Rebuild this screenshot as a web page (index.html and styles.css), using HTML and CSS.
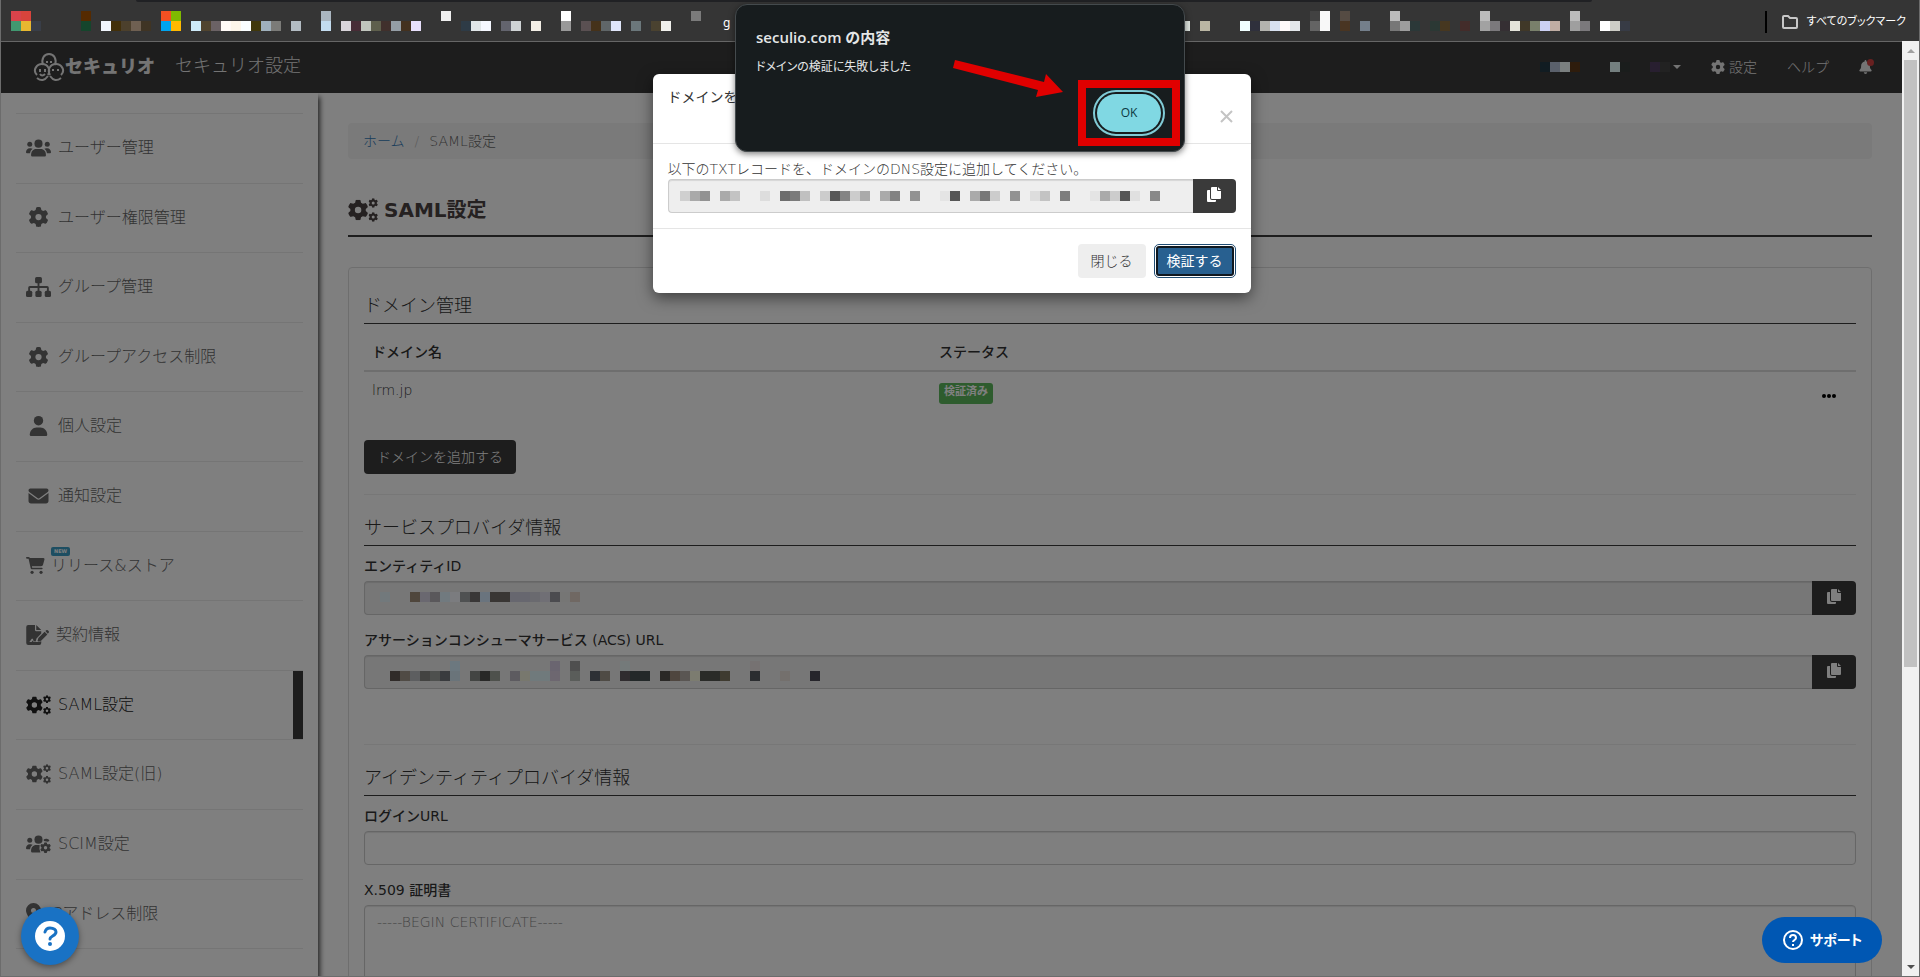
FILE: index.html
```html
<!DOCTYPE html>
<html lang="ja">
<head>
    <meta charset="UTF-8">
    <meta name="viewport" content="width=device-width, initial-scale=1.0">
    <title>SAML設定 | セキュリオ</title>
    <link rel="stylesheet" href="styles.css">
</head>
<body>

<!-- icons -->
<svg class="sprite" aria-hidden="true">
    <symbol id="gear" viewBox="0 0 512 512"><path d="M495.9 166.6c3.2 8.7 .5 18.4-6.4 24.6l-43.3 39.4c1.1 8.3 1.7 16.8 1.7 25.4s-.6 17.1-1.7 25.4l43.3 39.4c6.9 6.2 9.6 15.9 6.4 24.6c-4.4 11.9-9.7 23.3-15.8 34.3l-4.7 8.1c-6.6 11-14 21.4-22.1 31.2c-5.9 7.2-15.7 9.6-24.5 6.8l-55.7-17.7c-13.4 10.3-28.2 18.9-44 25.4l-12.5 57.1c-2 9.1-9 16.3-18.2 17.8c-13.8 2.3-28 3.5-42.5 3.5s-28.7-1.2-42.5-3.5c-9.2-1.5-16.2-8.7-18.2-17.8l-12.5-57.1c-15.8-6.5-30.6-15.1-44-25.4L83.1 425.9c-8.8 2.8-18.6 .3-24.5-6.8c-8.1-9.8-15.5-20.2-22.1-31.2l-4.7-8.1c-6.1-11-11.4-22.4-15.8-34.3c-3.2-8.7-.5-18.4 6.4-24.6l43.3-39.4C64.6 273.1 64 264.6 64 256s.6-17.1 1.7-25.4L22.4 191.2c-6.9-6.2-9.6-15.9-6.4-24.6c4.4-11.9 9.7-23.3 15.8-34.3l4.7-8.1c6.6-11 14-21.4 22.1-31.2c5.9-7.2 15.7-9.6 24.5-6.8l55.7 17.7c13.4-10.3 28.2-18.9 44-25.4l12.5-57.1c2-9.1 9-16.3 18.2-17.8C227.3 1.2 241.5 0 256 0s28.7 1.2 42.5 3.5c9.2 1.5 16.2 8.7 18.2 17.8l12.5 57.1c15.8 6.5 30.6 15.1 44 25.4l55.7-17.7c8.8-2.8 18.6-.3 24.5 6.8c8.1 9.8 15.5 20.2 22.1 31.2l4.7 8.1c6.1 11 11.4 22.4 15.8 34.3zM256 336a80 80 0 1 0 0-160 80 80 0 1 0 0 160z"/></symbol>
    <symbol id="gears" viewBox="0 0 640 512">
        <use href="#gear" x="-5" y="36" width="440" height="440"/>
        <use href="#gear" x="435" y="4" width="205" height="205"/>
        <use href="#gear" x="435" y="303" width="205" height="205"/>
    </symbol>
    <symbol id="users" viewBox="0 0 640 512">
        <circle cx="320" cy="144" r="104"/>
        <circle cx="96" cy="160" r="64"/>
        <circle cx="544" cy="160" r="64"/>
        <path d="M130 448c-6-110 55-168 130-168h120c75 0 136 58 130 168q-3 24-26 24H156q-23 0-26-24z"/>
        <path d="M0 365c0-60 40-105 95-105h25q30 0 50 14c-40 30-62 70-66 118H25q-25 0-25-27zM640 365c0-60-40-105-95-105h-25q-30 0-50 14c40 30 62 70 66 118h79q25 0 25-27z"/>
    </symbol>
    <symbol id="users-gear" viewBox="0 0 640 512">
        <circle cx="320" cy="144" r="104"/>
        <circle cx="96" cy="160" r="64"/>
        <path d="M130 448c-6-110 55-168 130-168h90q-20 90 20 192H156q-23 0-26-24z"/>
        <path d="M0 365c0-60 40-105 95-105h25q30 0 50 14c-40 30-62 70-66 118H25q-25 0-25-27z"/>
        <path d="M450 150a80 56 0 0 1 150 20l-40 30-100-20z"/>
        <use href="#gear" x="360" y="210" width="280" height="280"/>
    </symbol>
    <symbol id="sitemap" viewBox="0 0 640 512">
        <rect x="232" y="0" width="176" height="160" rx="40"/>
        <rect x="0" y="352" width="160" height="160" rx="40"/>
        <rect x="240" y="352" width="160" height="160" rx="40"/>
        <rect x="480" y="352" width="160" height="160" rx="40"/>
        <path d="M296 140h48v92h196q44 0 44 44v90h-48v-86H344v86h-48v-86H104v86H56v-90q0-44 44-44h196z"/>
    </symbol>
    <symbol id="user" viewBox="0 0 448 512">
        <circle cx="224" cy="120" r="120"/>
        <path d="M0 482c0-100 76-190 178-190h92c102 0 178 90 178 190q0 30-30 30H30q-30 0-30-30z"/>
    </symbol>
    <symbol id="envelope" viewBox="0 0 512 512">
        <path d="M48 64C21.500 64 0 85.500 0 112c0 15.100 7.100 29.300 19.200 38.400L236.800 313.600c11.400 8.500 27 8.500 38.400 0L492.800 150.400c12.100-9.100 19.200-23.300 19.200-38.400c0-26.500-21.500-48-48-48H48zM0 176V384c0 35.300 28.700 64 64 64H448c35.300 0 64-28.700 64-64V176L294.400 339.200c-22.800 17.100-54 17.100-76.800 0L0 176z"/>
    </symbol>
    <symbol id="cart" viewBox="0 0 576 512">
        <path d="M0 24q0-24 24-24h46c26 0 42 12 50 32h410q40 2 30 44l-42 152c-8 30-30 48-62 48H180l8 48h292q24 0 24 24t-24 24H176q-28-2-34-30L78 48H24Q0 48 0 24z"/>
        <circle cx="184" cy="464" r="48"/>
        <circle cx="456" cy="464" r="48"/>
    </symbol>
    <symbol id="contract" viewBox="0 0 576 512">
        <path fill-rule="evenodd" d="M0 50Q0 0 50 0h174v128q0 32 32 32h128v60L262 345l-22 80-50-10-20-60h-30l-60 80h60l24-40 24 40h120l76-20v45q0 52-50 52H50Q0 512 0 462zM256 0l128 128H256z"/>
        <path d="M290 400l20-65 160-160 70 70-160 160-72 20q-20 0-18-25zM490 155l22-22q20-14 40 2l24 26q14 20-4 40l-20 22z"/>
    </symbol>
    <symbol id="pin" viewBox="0 0 384 512">
        <path fill-rule="evenodd" d="M216 500C267 435 384 279 384 192a192 192 0 0 0-384 0c0 87 117 243 168 308q24 24 48 0zM192 128a64 64 0 1 1 0 128 64 64 0 0 1 0-128z"/>
    </symbol>
    <symbol id="copy" viewBox="0 0 14 16">
        <path d="M1 4h2v8q0 2 2 2h4v1q0 1-1 1H1q-1 0-1-1V5q0-1 1-1z"/>
        <path d="M5 1h5v3q0 1 1 1h3v7q0 1-1 1H5q-1 0-1-1V2q0-1 1-1zM11 1l3 3h-3z"/>
    </symbol>
    <symbol id="bell" viewBox="0 0 448 512">
        <path d="M224 0q-32 0-32 32v20C119 66 64 130 64 208c0 80-12 106-57 156-18 22-4 52 25 52h384c29 0 43-30 25-52-45-50-57-76-57-156 0-78-55-142-128-156V32q0-32-32-32zM160 448h128q-4 62-64 64-60-2-64-64z"/>
    </symbol>
</svg>

<div class="browser">
    <div class="bookmarks">
        <div class="toolbar-edge"></div>
        <svg class="mosaic bookmarks-left" data-cells="bookmarksLeft" width="722" height="20"></svg>
        <span class="bookmark-text">g ：</span>
        <svg class="mosaic bookmarks-right" data-cells="bookmarksRight" width="450" height="20"></svg>
        <div class="all-bookmarks">
            <svg class="line" width="18" height="16" viewBox="0 0 18 16"><path d="M2 13V3q0-1 1-1h4l2 2h6q1 0 1 1v8q0 1-1 1H3q-1 0-1-1z" stroke="#c7c7c7" stroke-width="2"/></svg>
            <span>すべてのブックマーク</span>
        </div>
    </div>

    <div class="viewport">
        <div class="page">
            <nav class="navbar">
                <a href="#" class="brand">
                    <svg class="line" width="32" height="30" viewBox="0 0 32 30" stroke="currentColor" stroke-width="2">
                        <path d="M10 13C8 7 11 2 16 2s8 5 6 11"/>
                        <path d="M4 23C-1 18 4 12 9 12c6 0 9 6 6 11M28 23c5-5 0-11-5-11-6 0-9 6-6 11"/>
                        <path d="M4 26q6 5 11-2M28 26q-6 5-11-2"/>
                        <path d="M14 9v2M18 9v2M7 17v3M12 17v3M20 17v2M25 17v2M7 22q2 3 5 0"/>
                    </svg>
                    <span>セキュリオ</span>
                </a>
                <span class="nav-title">セキュリオ設定</span>
                <ul class="nav-right">
                    <li><a href="#" class="account" aria-label="アカウント"><svg class="mosaic" data-cells="account" width="130" height="10"></svg><i class="caret"></i></a></li>
                    <li><a href="#"><svg class="nav-gear"><use href="#gear"/></svg>設定</a></li>
                    <li><a href="#">ヘルプ</a></li>
                    <li><a href="#" class="notice" aria-label="お知らせ"><svg class="nav-bell"><use href="#bell"/></svg><i class="dot"></i></a></li>
                </ul>
            </nav>

            <div class="columns">
                <aside class="sidebar">
                    <ul>
                        <li><a href="#"><svg class="icon"><use href="#users"/></svg>ユーザー管理</a></li>
                        <li><a href="#"><svg class="icon"><use href="#gear"/></svg>ユーザー権限管理</a></li>
                        <li><a href="#"><svg class="icon"><use href="#sitemap"/></svg>グループ管理</a></li>
                        <li><a href="#"><svg class="icon"><use href="#gear"/></svg>グループアクセス制限</a></li>
                        <li><a href="#"><svg class="icon"><use href="#user"/></svg>個人設定</a></li>
                        <li><a href="#"><svg class="icon"><use href="#envelope"/></svg>通知設定</a></li>
                        <li><a href="#"><svg class="icon icon-cart"><use href="#cart"/></svg>リリース&amp;ストア<span class="new">NEW</span></a></li>
                        <li><a href="#"><svg class="icon icon-contract"><use href="#contract"/></svg>契約情報</a></li>
                        <li class="active"><a href="#"><svg class="icon"><use href="#gears"/></svg>SAML設定</a></li>
                        <li><a href="#"><svg class="icon"><use href="#gears"/></svg>SAML設定(旧)</a></li>
                        <li><a href="#"><svg class="icon"><use href="#users-gear"/></svg>SCIM設定</a></li>
                        <li><a href="#"><svg class="icon icon-pin"><use href="#pin"/></svg>IPアドレス制限</a></li>
                        <li></li>
                    </ul>
                </aside>

                <main class="content">
                    <ol class="breadcrumb">
                        <li><a href="#">ホーム</a></li>
                        <li>SAML設定</li>
                    </ol>
                    <h1><svg class="h1-icon"><use href="#gears"/></svg>SAML設定</h1>

                    <div class="panel">
                        <h2 class="first">ドメイン管理</h2>
                        <table class="domains">
                            <thead>
                                <tr><th class="col-name">ドメイン名</th><th>ステータス</th><th class="col-menu"></th></tr>
                            </thead>
                            <tbody>
                                <tr>
                                    <td>lrm.jp</td>
                                    <td><span class="label-success">検証済み</span></td>
                                    <td><button type="button" class="menu-button" aria-label="メニュー"><svg width="14" height="4"><circle cx="2" cy="2" r="2"/><circle cx="7" cy="2" r="2"/><circle cx="12" cy="2" r="2"/></svg></button></td>
                                </tr>
                            </tbody>
                        </table>
                        <button type="button" class="btn btn-dark">ドメインを追加する</button>

                        <hr>
                        <h2>サービスプロバイダ情報</h2>
                        <div class="form-group">
                            <label for="entityId">エンティティID</label>
                            <div class="input-group">
                                <input type="text" id="entityId" readonly>
                                <svg class="mosaic masked" data-cells="entity" width="500" height="30"></svg>
                                <button type="button" class="copy-button" aria-label="コピー"><svg><use href="#copy"/></svg></button>
                            </div>
                        </div>
                        <div class="form-group">
                            <label for="acsUrl">アサーションコンシューマサービス (ACS) URL</label>
                            <div class="input-group">
                                <input type="text" id="acsUrl" readonly>
                                <svg class="mosaic masked" data-cells="acs" width="500" height="30"></svg>
                                <button type="button" class="copy-button" aria-label="コピー"><svg><use href="#copy"/></svg></button>
                            </div>
                        </div>

                        <hr class="wide">
                        <h2>アイデンティティプロバイダ情報</h2>
                        <div class="form-group">
                            <label for="loginUrl">ログインURL</label>
                            <input type="text" id="loginUrl">
                        </div>
                        <div class="form-group">
                            <label for="cert">X.509 証明書</label>
                            <textarea id="cert" rows="8" placeholder="-----BEGIN CERTIFICATE-----"></textarea>
                        </div>
                    </div>
                </main>
            </div>

            <div class="backdrop"></div>

            <div class="modal" role="dialog" aria-labelledby="modalTitle">
                <div class="modal-header">
                    <h4 id="modalTitle">ドメインを追加する</h4>
                    <button type="button" class="close" aria-label="閉じる"><svg width="13" height="13" viewBox="0 0 13 13"><path d="M1 1l11 11M12 1L1 12" stroke="#c4c4c4" stroke-width="2"/></svg></button>
                </div>
                <div class="modal-body">
                    <label for="txtRecord">以下のTXTレコードを、ドメインのDNS設定に追加してください。</label>
                    <div class="input-group">
                        <input type="text" id="txtRecord" readonly>
                        <svg class="mosaic masked" data-cells="txt" width="500" height="30"></svg>
                        <button type="button" class="copy-button" aria-label="コピー"><svg><use href="#copy"/></svg></button>
                    </div>
                </div>
                <div class="modal-footer">
                    <button type="button" class="btn btn-light">閉じる</button>
                    <button type="button" class="btn btn-primary">検証する</button>
                </div>
            </div>

            <button type="button" class="help-button" aria-label="ヘルプ">
                <svg class="line" width="30" height="30" viewBox="0 0 30 30"><circle cx="15" cy="15" r="15" fill="#fff"/><path d="M10 11q1-4 5-4c4 0 6 2 6 4 0 4-6 4-6 7" stroke="#1972c4" stroke-width="3" stroke-linecap="round"/><circle cx="15" cy="23" r="2" fill="#1972c4"/></svg>
            </button>
            <button type="button" class="support-button">
                <svg class="line" width="22" height="22" viewBox="0 0 22 22" stroke="#fff" stroke-width="2"><circle cx="11" cy="11" r="9"/><path d="M8 9q0-3 3-3t3 3c0 2-3 2-3 4"/><path d="M11 15v2"/></svg>
                サポート
            </button>
        </div>

        <div class="scrollbar">
            <i class="arrow-up"></i>
            <div class="thumb"></div>
            <i class="arrow-down"></i>
        </div>
    </div>

    <div class="alert" role="alertdialog" aria-labelledby="alertTitle">
        <strong id="alertTitle">seculio.com の内容</strong>
        <p>ドメインの検証に失敗しました</p>
        <div class="alert-actions">
            <div class="highlight"><button type="button" class="ok">OK</button></div>
        </div>
        <svg class="pointer" width="112" height="42" viewBox="0 0 112 42"><path d="M2 0L91 22l2-8 17 18-27 5 2-7L0 8z" fill="#e00000"/></svg>
    </div>
</div>

<script src="script.js"></script>
</body>
</html>
```
FILE: script.js
```js
// Masked texts: "column row colour" on a grid of 10px cells
var mosaics = {
    bookmarksLeft: "1 0 d8434b,2 0 d8443c,8 0 552a00,16 0 f25022,17 0 7fba00,32 0 aab6c0,44 0 efefef,56 0 ffffff,69 0 7b7b7b," +
        "1 1 419870,2 1 e8b830,3 1 393e48,8 1 15452c,10 1 f0f5fc,11 1 42300a,12 1 4c402c,13 1 6f6052,14 1 3f3424,16 1 00a4ef,17 1 ffb900," +
        "19 1 cdeaf8,20 1 50442f,21 1 6b6265,22 1 fffaf6,23 1 fdf6ea,24 1 fafeff,25 1 40380c,26 1 9fb0bc,27 1 7b7b78,29 1 b3bcc3,32 1 c3dcef," +
        "34 1 d8d4da,35 1 472c36,36 1 c0c5bd,37 1 5e5f4c,38 1 40302c,39 1 949da5,40 1 43311f,41 1 e8e0fc,46 1 2e3b46,47 1 e0e6e8,48 1 f5f8ff," +
        "50 1 63646e,51 1 cfd3d5,53 1 f3eee5,56 1 999999,58 1 5a5052,59 1 45321a,60 1 606668,61 1 e0e6fa,63 1 6b777b,65 1 4a4230,66 1 f0f0ec",
    bookmarksRight: "13 0 424242,14 0 f8f8f8,16 0 554b43,21 0 bcbcbc,30 0 bcbcbc,39 0 bcbcbc," +
        "0 1 dfe5e0,2 1 bab6a3,6 1 f0ffff,7 1 2f303c,8 1 b3b3ae,9 1 d8e1f0,10 1 fffafa,11 1 e3e7eb,13 1 646464,14 1 f8f8f8,16 1 493522,18 1 747f8b," +
        "21 1 777777,22 1 9d9d9d,23 1 2b3838,25 1 2b3834,26 1 463720,28 1 432c2a,30 1 a2a2a2,31 1 7b797c,32 1 352f33,33 1 e4e4da,34 1 403828," +
        "35 1 79806b,36 1 ccd0f3,37 1 c0ada3,39 1 9f9f9f,40 1 7b797c,42 1 ffffff,43 1 cdcdc6,44 1 373b45",
    account: "0 0 223844,1 0 b4c0d6,2 0 f4ffff,3 0 5c3818,7 0 e8fffe,8 0 343a38,11 0 503e60,12 0 444444",
    entity: "1 1 e4f2f8,4 1 9e8c78,5 1 d4d0e0,6 1 b4b0b6,7 1 e2f4ff,8 1 f6f8ff,9 1 9ea2a4,10 1 726e6e,11 1 d4e8fc,12 1 726c68,13 1 726c68," +
        "14 1 cecede,15 1 cecede,16 1 d4d4de,17 1 e0deea,18 1 96969f,19 1 ececea,20 1 e0d0c6",
    acs: "8 0 d8f0ff,18 0 d4cae0,20 0 9e9e9e,25 0 e8f4f4,38 0 ece4e4," +
        "2 1 605652,3 1 a0968a,4 1 babcc0,5 1 868682,6 1 9ca09c,7 1 72767c,8 1 d4e8f4,10 1 868a86,11 1 50504e,12 1 9ca298,14 1 bab6c0,15 1 f0f0dc," +
        "16 1 e0f4f8,17 1 e0f4f8,18 1 dacee0,20 1 b4bab4,22 1 5a606a,23 1 9e968a,25 1 60585e,26 1 465052,27 1 465052,29 1 54504c,30 1 9e8c7e," +
        "31 1 b4aca6,32 1 f8f8e0,33 1 545650,34 1 545650,35 1 7e7660,38 1 565a60,41 1 e8e0da,44 1 4c4a56",
    txt: "0 1 cfcfcf,1 1 a9a9a9,2 1 929292,4 1 aaaaaa,5 1 c3c3c3,8 1 dddddd,10 1 6d6d6d,11 1 7b7b7b,12 1 c0c0c0,14 1 cccccc,15 1 575757," +
        "16 1 848484,17 1 cccccc,18 1 aaaaaa,20 1 aaaaaa,21 1 828282,23 1 929292,26 1 e4e4e4,27 1 555555,29 1 aaaaaa,30 1 777777,31 1 cccccc," +
        "33 1 929292,35 1 dddddd,36 1 c3c3c3,38 1 7d7d7d,41 1 e4e4e4,42 1 aaaaaa,43 1 cccccc,44 1 555555,45 1 e0e0e0,47 1 888888"
};

document.querySelectorAll('.mosaic').forEach(function (svg) {
    mosaics[svg.dataset.cells].split(',').forEach(function (cell) {
        var parts = cell.split(' ');
        var rect = document.createElementNS('http://www.w3.org/2000/svg', 'rect');
        rect.setAttribute('x', parts[0] * 10);
        rect.setAttribute('y', parts[1] * 10);
        rect.setAttribute('width', 10);
        rect.setAttribute('height', 10);
        rect.setAttribute('fill', '#' + parts[2]);
        svg.appendChild(rect);
    });
});
```
FILE: styles.css
```css
* {
    box-sizing: border-box;
}

body {
    margin: 0;
    font-family: "DejaVu Sans", "Noto Sans CJK JP", sans-serif;
    font-size: 14px;
    font-weight: 300;
    line-height: 20px;
    color: #333;
}

ul,
ol {
    list-style: none;
    margin: 0;
    padding: 0;
}

a {
    color: inherit;
    text-decoration: none;
}

button,
input,
textarea {
    font: inherit;
}

svg {
    fill: currentColor;
    flex: none;
}

.line {
    fill: none;
}

.sprite {
    display: none;
}

.browser {
    position: relative;
    height: 100vh;
    display: flex;
    flex-direction: column;
    overflow: hidden;
    border: solid #6c6c6c;
    border-width: 0 1px 1px;
}

/* bookmarks bar */
.bookmarks {
    position: relative;
    flex: none;
    display: flex;
    height: 41px;
    padding-top: 11px;
    background: #353535;
    color: #fff;
}

.toolbar-edge {
    position: absolute;
    top: 0;
    left: 135px;
    right: 327px;
    height: 2px;
    background: #202124;
    border-radius: 0 0 8px 8px;
}

.bookmark-text {
    width: 457px;
    font-family: "Noto Sans", "Noto Sans CJK JP", sans-serif;
    font-size: 12px;
    font-weight: 400;
    line-height: 24px;
}

.all-bookmarks {
    display: flex;
    align-items: center;
    gap: 8px;
    height: 22px;
    margin-left: auto;
    padding: 0 13px 0 14px;
    border-left: 2px solid #000;
    font-size: 11px;
    font-weight: 400;
    font-feature-settings: "palt";
}

.viewport {
    flex: 1;
    min-height: 0;
    display: flex;
}

.page {
    position: relative;
    flex: 1;
    min-width: 0;
    overflow: hidden;
    background: #fff;
}

/* navbar */
.navbar {
    display: flex;
    align-items: center;
    height: 52px;
    padding: 0 30px 2px 32px;
    background: #3a3a3a;
    border-top: 1px solid #ccc;
    color: #e8e8e8;
}

.brand {
    display: flex;
    align-items: center;
    font-size: 18px;
    font-weight: 900;
}

.nav-title {
    margin-left: 20px;
    padding-bottom: 2px;
    font-size: 18px;
}

.nav-right {
    display: flex;
    align-items: center;
    margin-left: auto;
    gap: 30px;
}

.nav-right a {
    display: flex;
    align-items: center;
}

.nav-gear {
    width: 14px;
    height: 14px;
    margin-right: 4px;
}

.nav-bell {
    width: 13px;
    height: 14px;
}

.account {
    gap: 3px;
}

.caret {
    border: 4px solid transparent;
    border-top-color: #e8e8e8;
    border-bottom: 0;
}

.notice {
    position: relative;
}

.dot {
    position: absolute;
    top: -1px;
    right: -2px;
    width: 7px;
    height: 7px;
    border-radius: 50%;
    background: #d04040;
}

.columns {
    display: flex;
}

/* sidebar */
.sidebar {
    flex: none;
    width: 317px;
    padding: 20px 15px;
    box-shadow: 2px 4px 5px rgba(0, 0, 0, 0.7);
    clip-path: inset(0 -12px 0 0);
    font-size: 16px;
    line-height: 1.6;
    color: #666;
}

.sidebar li {
    border-top: 1px solid #ebebeb;
}

.sidebar a {
    position: relative;
    display: flex;
    align-items: center;
    padding: 21px 10px 22px;
}

.icon {
    width: 25px;
    height: 20px;
    margin-right: 7px;
}

.icon-cart {
    width: 19px;
    height: 17px;
    margin-right: 6px;
}

.icon-contract {
    width: 23px;
}

.icon-pin {
    width: 15px;
}

.new {
    position: absolute;
    top: 15px;
    left: 35px;
    padding: 0 3px;
    border-radius: 2px;
    background: #3a9cc4;
    color: #fff;
    font-size: 5px;
    font-weight: 700;
    line-height: 9px;
}

.sidebar .active a {
    color: #222;
    border-right: 10px solid #3a3a3a;
}

/* content */
.content {
    flex: 1;
    min-width: 0;
    padding: 30px;
}

.breadcrumb {
    display: flex;
    padding: 8px 15px;
    background: #f5f5f5;
    border-radius: 4px;
    color: #666;
}

.breadcrumb a {
    color: #337ab7;
}

.breadcrumb li + li::before {
    content: "/";
    padding: 0 10px;
    color: #bbb;
}

h1 {
    display: flex;
    align-items: center;
    margin: 35px 0 30px;
    padding-bottom: 9px;
    border-bottom: 2px solid #3a3a3a;
    font-size: 20px;
    font-weight: 700;
    line-height: 32px;
    color: #4a4242;
}

.h1-icon {
    width: 30px;
    height: 24px;
    margin-right: 6px;
}

.panel {
    padding: 15px;
    border: 1px solid #ddd;
    border-radius: 4px;
}

h2 {
    margin: 20px 0 10px;
    padding-bottom: 4px;
    border-bottom: 1px solid #3a3a3a;
    font-size: 18px;
    font-weight: 300;
    line-height: 26px;
}

h2.first {
    margin-top: 10px;
}

hr {
    margin: 20px 0;
    border: 0;
    border-top: 1px solid #eee;
}

hr.wide {
    margin-top: 55px;
}

.domains {
    width: 100%;
    margin-bottom: 20px;
    border-collapse: collapse;
    table-layout: fixed;
}

.domains th {
    padding: 8px;
    border-bottom: 2px solid #ddd;
    text-align: left;
    font-weight: 500;
}

.domains td {
    padding: 8px;
    vertical-align: top;
}

.col-name {
    width: 38%;
}

.col-menu {
    width: 50px;
}

.label-success {
    display: inline-block;
    padding: 0 5px 3px;
    border-radius: 3px;
    background: #5cb85c;
    color: #fff;
    font-size: 11px;
    font-weight: 700;
    line-height: 18px;
}

.menu-button {
    display: block;
    height: 32px;
    padding: 0 8px;
    border: 0;
    background: none;
}

.menu-button svg {
    display: block;
}

.btn {
    padding: 6px 12px;
    border: 1px solid transparent;
    border-radius: 4px;
}

.btn-dark {
    background: #3a3a3a;
    color: #fff;
}

.btn-light {
    background: #eee;
    color: #333;
}

.btn-primary {
    background: #286090;
    border: 2px solid #101820;
    border-radius: 3px;
    outline: 1px solid #204d74;
    outline-offset: 1px;
    padding: 3px 9px;
    margin: 2px;
    color: #fff;
    font-weight: 400;
}

.form-group {
    margin-bottom: 15px;
}

.form-group label {
    display: block;
    margin-bottom: 5px;
    font-weight: 500;
}

input,
textarea {
    display: block;
    width: 100%;
    height: 34px;
    padding: 6px 12px;
    border: 1px solid #ccc;
    border-radius: 4px;
    background: #fff;
    box-shadow: inset 0 1px 1px rgba(0, 0, 0, 0.1);
}

textarea {
    height: 180px;
    resize: none;
}

textarea::placeholder {
    color: #888;
}

input[readonly] {
    background: #eee;
}

.input-group {
    position: relative;
    display: flex;
}

.input-group input {
    flex: 1;
    min-width: 0;
    border-right: 0;
    border-radius: 4px 0 0 4px;
}

.masked {
    position: absolute;
    top: 2px;
    left: 12px;
}

.form-group .masked {
    left: 6px;
    top: 1px;
}

.form-group + .form-group .masked {
    top: 6px;
}

.copy-button {
    flex: none;
    width: 44px;
    padding: 0 0 4px;
    border: 0;
    border-radius: 0 4px 4px 0;
    background: #3a3a3a;
    color: #fff;
}

.copy-button svg {
    display: block;
    width: 14px;
    height: 16px;
    margin: auto;
}

.backdrop {
    position: absolute;
    inset: 0;
    background: rgba(0, 0, 0, 0.5);
}

/* modal */
.modal {
    position: absolute;
    top: 33px;
    left: 50%;
    width: 598px;
    margin-left: -299px;
    background: #fff;
    border-radius: 6px;
    box-shadow: 0 5px 15px rgba(0, 0, 0, 0.5);
}

.modal-header {
    display: flex;
    justify-content: space-between;
    height: 70px;
    padding: 13px 15px 15px;
    border-bottom: 1px solid #e5e5e5;
}

.modal-header h4 {
    margin: 0;
    font-size: 14px;
    font-weight: 400;
}

.close {
    align-self: flex-end;
    padding: 0 3px;
    border: 0;
    background: none;
}

.modal-body {
    padding: 15px;
}

.modal-body label {
    display: block;
}

.modal-body .copy-button {
    width: 43px;
}

.modal-footer {
    display: flex;
    justify-content: flex-end;
    gap: 8px;
    padding: 15px;
    border-top: 1px solid #e5e5e5;
}

/* floating buttons */
.help-button {
    position: absolute;
    left: 20px;
    bottom: 11px;
    width: 58px;
    height: 58px;
    padding: 0;
    border: 0;
    border-radius: 50%;
    background: #1972c4;
    box-shadow: 0 2px 6px rgba(0, 0, 0, 0.4);
}

.help-button svg {
    display: block;
    margin: auto;
}

.support-button {
    position: absolute;
    right: 20px;
    bottom: 13px;
    display: flex;
    align-items: center;
    justify-content: center;
    gap: 6px;
    width: 120px;
    height: 46px;
    border: 0;
    border-radius: 23px;
    background: #0057b3;
    color: #fff;
    font-weight: 700;
    font-feature-settings: "palt";
}

/* scrollbar */
.scrollbar {
    flex: none;
    display: flex;
    flex-direction: column;
    align-items: center;
    width: 17px;
    padding: 8px 0 7px;
    background: #f1f1f1;
}

.arrow-up,
.arrow-down {
    border: 4px solid transparent;
}

.arrow-up {
    border-top: 0;
    border-bottom-color: #a0a0a0;
}

.arrow-down {
    margin-top: auto;
    border-bottom: 0;
    border-top-color: #505050;
}

.thumb {
    width: 13px;
    height: 66%;
    margin-top: 7px;
    background: #c1c1c1;
}

/* browser alert */
.alert {
    position: absolute;
    top: 4px;
    left: 50%;
    width: 450px;
    height: 148px;
    margin-left: -225px;
    padding: 20px;
    border: 1px solid #444a4d;
    border-radius: 12px;
    background: #171c1e;
    box-shadow: 0 2px 6px rgba(0, 0, 0, 0.5);
    color: #e4e6e7;
    font-family: "Open Sans", "Noto Sans CJK JP", sans-serif;
    font-size: 12px;
    font-weight: 400;
    font-feature-settings: "palt";
}

.alert strong {
    display: block;
    font-size: 15px;
    font-weight: 600;
    line-height: 24px;
}

.alert p {
    margin: 8px 0 0;
}

/* sits in the lower right corner */
.alert-actions {
    position: absolute;
    right: 4px;
    bottom: 5px;
}

.highlight {
    padding: 2px 7px;
    border: 8px solid #e00000;
}

.ok {
    display: block;
    width: 64px;
    height: 38px;
    margin: 4px;
    border: 0;
    border-radius: 19px;
    outline: 2px solid #80cbd6;
    outline-offset: 2px;
    background: #80d8e3;
    color: #0c3a42;
}

.pointer {
    position: absolute;
    top: 55px;
    left: 217px;
}
```
